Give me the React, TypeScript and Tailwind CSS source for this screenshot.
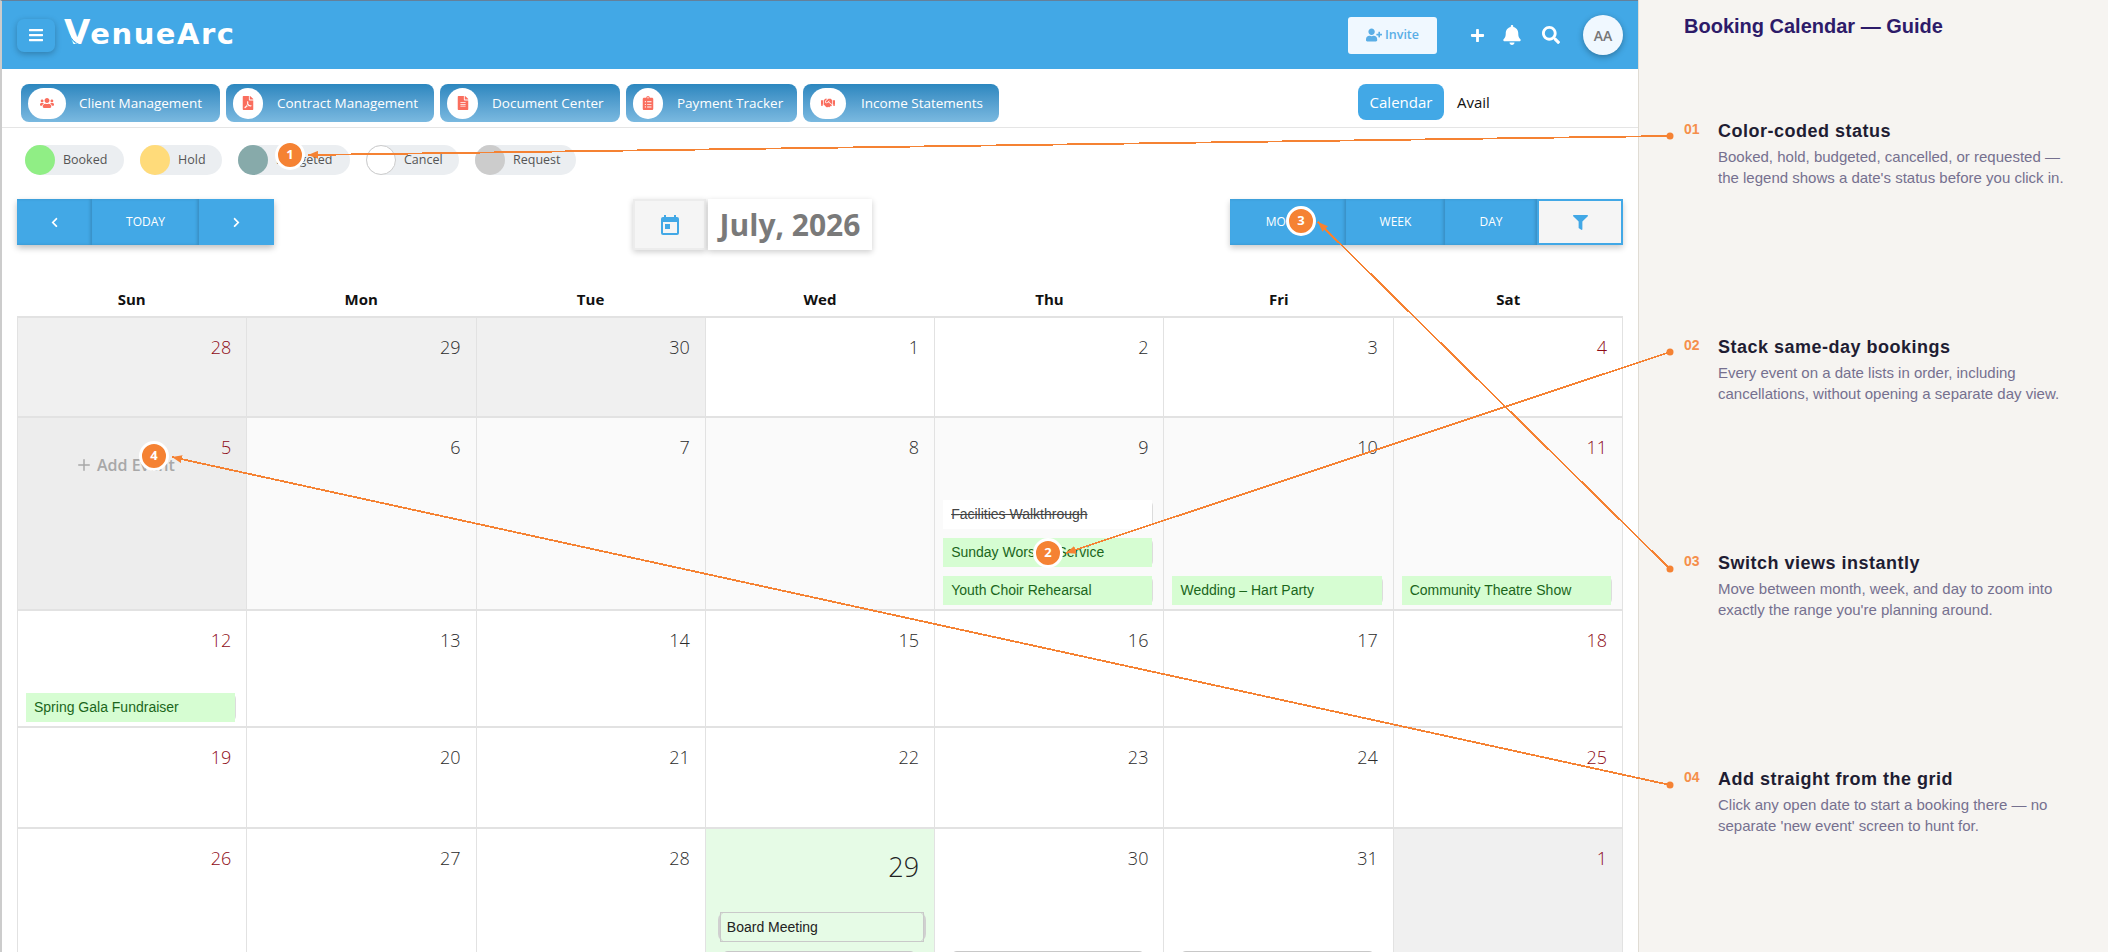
import type { ReactNode } from "react";
import { Plus } from "lucide-react";
import {
  FaBars,
  FaBell,
  FaChevronLeft,
  FaChevronRight,
  FaClipboardList,
  FaFileAlt,
  FaFilePdf,
  FaFilter,
  FaHandshake,
  FaPlus,
  FaSearch,
  FaUserPlus,
  FaUsers,
} from "react-icons/fa";

const tabs = [
  { label: "Client Management", icon: <FaUsers />, w: "w-[199px]", pill: "w-[38px]", gap: "gap-[13px]" },
  { label: "Contract Management", icon: <FaFilePdf />, w: "w-[208px]", pill: "w-[30px]", gap: "gap-[14px]" },
  { label: "Document Center", icon: <FaFileAlt />, w: "w-[180px]", pill: "w-[31px]", gap: "gap-[14px]" },
  { label: "Payment Tracker", icon: <FaClipboardList />, w: "w-[171px]", pill: "w-[30px]", gap: "gap-[14px]" },
  { label: "Income Statements", icon: <FaHandshake />, w: "w-[196px]", pill: "w-[36px]", gap: "gap-[15px]" },
];

const legend = [
  { label: "Booked", dot: "bg-[#90ee85]", w: "w-[99px]" },
  { label: "Hold", dot: "bg-[#ffdb7a]", w: "w-[82px]" },
  { label: "Budgeted", dot: "bg-[#87aaaa]", w: "w-[112px]" },
  { label: "Cancel", dot: "bg-white border border-[#cccccc]", w: "w-[93px]" },
  { label: "Request", dot: "bg-[#cccccc]", w: "w-[101px]" },
];

const guide = [
  {
    n: "01",
    title: "Color-coded status",
    lines: ["Booked, hold, budgeted, cancelled, or requested —", "the legend shows a date's status before you click in."],
  },
  {
    n: "02",
    title: "Stack same-day bookings",
    lines: ["Every event on a date lists in order, including", "cancellations, without opening a separate day view."],
  },
  {
    n: "03",
    title: "Switch views instantly",
    lines: ["Move between month, week, and day to zoom into", "exactly the range you're planning around."],
  },
  {
    n: "04",
    title: "Add straight from the grid",
    lines: ["Click any open date to start a booking there — no", "separate 'new event' screen to hunt for."],
  },
];

type Ev = { title: string; kind: "booked" | "cancel" | "plain" | "stub" };
type Day = { d: number; bg?: string; sun?: boolean; big?: boolean; add?: boolean; events?: Ev[] };

const weeks: { h: string; days: Day[] }[] = [
  {
    h: "h-[100px]",
    days: [
      { d: 28, bg: "bg-[#f0f0f0]", sun: true },
      { d: 29, bg: "bg-[#f0f0f0]" },
      { d: 30, bg: "bg-[#f0f0f0]" },
      { d: 1 },
      { d: 2 },
      { d: 3 },
      { d: 4, sun: true },
    ],
  },
  {
    h: "h-[193px]",
    days: [
      { d: 5, bg: "bg-[#ededed]", sun: true, add: true },
      { d: 6, bg: "bg-[#fafafa]" },
      { d: 7, bg: "bg-[#fafafa]" },
      { d: 8, bg: "bg-[#fafafa]" },
      {
        d: 9,
        bg: "bg-[#fafafa]",
        events: [
          { title: "Facilities Walkthrough", kind: "cancel" },
          { title: "Sunday Worship Service", kind: "booked" },
          { title: "Youth Choir Rehearsal", kind: "booked" },
        ],
      },
      { d: 10, bg: "bg-[#fafafa]", events: [{ title: "Wedding – Hart Party", kind: "booked" }] },
      { d: 11, bg: "bg-[#fafafa]", sun: true, events: [{ title: "Community Theatre Show", kind: "booked" }] },
    ],
  },
  {
    h: "h-[117px]",
    days: [
      { d: 12, sun: true, events: [{ title: "Spring Gala Fundraiser", kind: "booked" }] },
      { d: 13 },
      { d: 14 },
      { d: 15 },
      { d: 16 },
      { d: 17 },
      { d: 18, sun: true },
    ],
  },
  {
    h: "h-[101px]",
    days: [
      { d: 19, sun: true },
      { d: 20 },
      { d: 21 },
      { d: 22 },
      { d: 23 },
      { d: 24 },
      { d: 25, sun: true },
    ],
  },
  {
    h: "h-[157px]",
    days: [
      { d: 26, sun: true },
      { d: 27 },
      { d: 28 },
      {
        d: 29,
        big: true,
        bg: "bg-[#e6fbe6]",
        events: [
          { title: "Board Meeting", kind: "plain" },
          { title: "", kind: "stub" },
        ],
      },
      { d: 30, events: [{ title: "", kind: "stub" }] },
      { d: 31, events: [{ title: "", kind: "stub" }] },
      { d: 1, bg: "bg-[#f0f0f0]", sun: true },
    ],
  },
];

function EventChip({ ev }: { ev: Ev }) {
  if (ev.kind === "stub") {
    return <div className="mx-[8px] h-[29px] rounded-t-[6px] border-t-2 border-[#c8c8c8]" />;
  }
  if (ev.kind === "plain") {
    return (
      <div className="mr-[-2px] ml-[4px] h-[30px] rounded-[8px] border-x-2 border-[#d0d0d0]">
        <div className="flex h-full items-center border border-[#c9c9c9] pl-[6px] font-['Liberation_Sans'] text-[14px] text-[#222]">
          {ev.title}
        </div>
      </div>
    );
  }
  const cancel = ev.kind === "cancel";
  return (
    <div className="rounded-r-[6px] border-r border-[#dcdcdc]">
      <div
        className={
          cancel
            ? "flex h-[29px] items-center bg-white pl-[8px] font-['Liberation_Sans'] text-[14px] text-[#444] line-through"
            : "flex h-[29px] items-center bg-[#d6fdd2] pl-[8px] font-['Liberation_Sans'] text-[14px] text-[#1b661b]"
        }
      >
        {ev.title}
      </div>
    </div>
  );
}

function DayCell({ day }: { day: Day }) {
  return (
    <div className={`relative flex min-w-0 flex-col border-r border-b-2 border-[#e2e2e2] pb-[4px] ${day.bg ?? "bg-white"}`}>
      <div
        className={
          day.big
            ? "pt-[20px] pr-[15px] text-right text-[27px] leading-[36px] font-light text-[#222]"
            : `pt-[17px] pr-[15px] text-right text-[18px] leading-[25px] font-light ${day.sun ? "text-[#8e0b16]" : "text-[#2b2b2b]"}`
        }
      >
        {day.d}
      </div>
      {day.add && (
        <div className="absolute top-[35px] left-[57px] flex items-center gap-[4px] text-[16px] font-semibold text-[#a8a8a8]">
          <Plus size={18} />
          Add Event
        </div>
      )}
      <div className="mt-auto flex flex-col gap-[9px] pr-[10px] pl-[8px]">
        {day.events?.map((ev, i) => <EventChip key={i} ev={ev} />)}
      </div>
    </div>
  );
}

function BarButton({ className, children }: { className: string; children: ReactNode }) {
  return (
    <div className={`flex h-[46px] items-center justify-center bg-[#42a8e6] text-[12px] text-white shadow-[inset_-2px_0_3px_rgba(0,0,0,0.14)] ${className}`}>
      {children}
    </div>
  );
}

function Badge({ n, className }: { n: number; className: string }) {
  return (
    <div className={`absolute flex h-[30px] w-[30px] items-center justify-center rounded-full border-[3px] border-white bg-[#f58233] text-[13px] font-bold text-white ${className}`}>
      {n}
    </div>
  );
}

export default function App() {
  return (
    <div className="relative flex h-[952px] w-[2108px] overflow-hidden bg-white font-['Open_Sans',sans-serif]">
      {/* App */}
      <div className="h-full w-[1638px] shrink-0 border-t border-l-2 border-t-[#64809a] border-l-[#cccccc]">
        {/* Header */}
        <div className="flex h-[68px] items-center bg-[#42a8e6] pr-[15px] pl-[15px]">
          <div className="flex h-[33px] w-[38px] items-center justify-center rounded-[7px] bg-[#42a8e6] text-[16px] text-white shadow-[0_2px_6px_rgba(0,0,0,0.25)]">
            <FaBars />
          </div>
          <div className="relative mb-[4px] ml-[9px] font-['DejaVu_Sans',sans-serif] text-[29px] leading-[34px] font-bold tracking-[1.5px] text-white">
            <span className="text-[34px] tracking-normal">V</span>enueArc
            <svg className="absolute top-[7px] left-0 h-[26px] w-[30px]" viewBox="0 0 30 26" fill="none">
              <path d="M5 12c2 5 6 9 11 11" stroke="#42a8e6" strokeWidth="1" />
              <path d="M3 10c3 6 7 11 12 14" stroke="#42a8e6" strokeWidth="0.7" />
            </svg>
          </div>
          <div className="ml-auto flex h-[37px] w-[89px] items-center justify-center gap-[3px] rounded-[3px] bg-[#f0f8ff] text-[12.5px] font-semibold text-[#5aaee6]">
            <FaUserPlus className="text-[16px]" />
            Invite
          </div>
          <FaPlus className="ml-[33px] text-[15px] text-white" />
          <FaBell className="ml-[17px] text-[20px] text-white" />
          <FaSearch className="ml-[20px] text-[18px] text-white" />
          <div className="ml-[23px] flex h-[40px] w-[40px] items-center justify-center rounded-full bg-[#f0f8ff] text-[14px] font-semibold text-[#777] shadow-[0_2px_6px_rgba(0,0,0,0.3)]">
            AA
          </div>
        </div>

        {/* Tabs */}
        <div className="flex h-[59px] items-start border-b border-[#e5e5e5] pt-[15px] pl-[19px]">
          <div className="flex gap-[6px]">
            {tabs.map((t) => (
              <div
                key={t.label}
                className={`flex h-[38px] items-center rounded-[8px] bg-gradient-to-b from-[#2b87bf] to-[#7ab9e0] pl-[7px] text-[13.5px] text-white ${t.w} ${t.gap}`}
              >
                <span className={`flex h-[31px] items-center justify-center rounded-full bg-white text-[14px] text-[#fa6e5e] ${t.pill}`}>
                  {t.icon}
                </span>
                {t.label}
              </div>
            ))}
          </div>
          <div className="ml-[359px] flex h-[36px] w-[86px] items-center justify-center rounded-[8px] bg-[#42a8e6] text-[15px] text-white">
            Calendar
          </div>
          <div className="ml-[13px] flex h-[36px] items-center text-[15px] text-[#111]">Avail</div>
        </div>

        {/* Legend */}
        <div className="flex gap-[16px] pt-[17px] pl-[23px]">
          {legend.map((l) => (
            <div key={l.label} className={`flex h-[30px] items-center gap-[8px] rounded-full bg-[#ebeef1] text-[12.5px] text-[#555] ${l.w}`}>
              <span className={`h-[30px] w-[30px] shrink-0 rounded-full ${l.dot}`} />
              {l.label}
            </div>
          ))}
        </div>

        {/* Toolbar */}
        <div className="relative mt-[24px] flex h-[51px] items-start pl-[15px]">
          <div className="flex rounded-[2px] shadow-[0_3px_6px_rgba(0,0,0,0.25)]">
            <BarButton className="w-[75px]">
              <FaChevronLeft className="text-[11px]" />
            </BarButton>
            <BarButton className="w-[107px]">TODAY</BarButton>
            <div className="flex h-[46px] w-[75px] items-center justify-center bg-[#42a8e6] text-white">
              <FaChevronRight className="text-[11px]" />
            </div>
          </div>
          <div className="ml-[359px] flex h-[51px] w-[73px] items-center justify-center border-2 border-[#ececec] bg-[#f5f5f5] shadow-[0_2px_6px_rgba(0,0,0,0.2)]">
            <svg width="18" height="20" viewBox="0 0 18 20">
              <rect x="0" y="2" width="18" height="18" rx="2" fill="#42a8e6" />
              <rect x="2" y="7" width="14" height="11" fill="#f5f5f5" />
              <rect x="4" y="9" width="5" height="5" fill="#42a8e6" />
              <rect x="3" y="0" width="2" height="3" fill="#42a8e6" />
              <rect x="13" y="0" width="2" height="3" fill="#42a8e6" />
            </svg>
          </div>
          <div className="ml-[2px] flex h-[51px] w-[164px] items-center justify-center bg-white text-[30px] font-bold text-[#7a7a7a] shadow-[0_2px_6px_rgba(0,0,0,0.2)]">
            July, 2026
          </div>
          <div className="mr-[15px] ml-auto flex shadow-[0_3px_6px_rgba(0,0,0,0.2)]">
            <BarButton className="w-[116px] shadow-[inset_-2px_0_3px_rgba(0,0,0,0.14),0_8px_14px_rgba(0,0,0,0.25)]">MONTH</BarButton>
            <BarButton className="w-[99px]">WEEK</BarButton>
            <BarButton className="w-[92px]">DAY</BarButton>
            <div className="flex h-[46px] w-[86px] items-center justify-center border-2 border-[#42a8e6] bg-[#f5f5f5] text-[15px] text-[#42a8e6]">
              <FaFilter />
            </div>
          </div>
        </div>

        {/* Calendar */}
        <div className="mt-[37px] ml-[15px] w-[1606px]">
          <div className="grid h-[31px] grid-cols-7 border-b-2 border-[#e2e2e2]">
            {["Sun", "Mon", "Tue", "Wed", "Thu", "Fri", "Sat"].map((d) => (
              <div key={d} className="text-center text-[15px] leading-[24px] font-bold text-[#111]">
                {d}
              </div>
            ))}
          </div>
          {weeks.map((w, i) => (
            <div key={i} className={`grid grid-cols-7 border-l border-[#e2e2e2] ${w.h}`}>
              {w.days.map((day, j) => (
                <DayCell key={j} day={day} />
              ))}
            </div>
          ))}
        </div>
      </div>

      {/* Guide */}
      <div className="h-full flex-1 border-l border-[#e0dcd4] bg-[#f6f4f1] pl-[45px] font-['Liberation_Sans',sans-serif]">
        <div className="mt-[13px] mb-[81px] text-[20px] leading-[26px] font-bold text-[#2d1b69]">Booking Calendar — Guide</div>
        {guide.map((g) => (
          <div key={g.n} className="flex h-[216px] items-start">
            <div className="mt-[-1px] w-[34px] shrink-0 text-[14px] leading-[20px] font-bold text-[#f58f4b]">{g.n}</div>
            <div>
              <div className="text-[18px] leading-[22px] font-bold tracking-[0.5px] text-[#1f1d33]">{g.title}</div>
              <div className="mt-[4px] text-[15px] leading-[21px] text-[#75708f]">
                {g.lines.map((line) => (
                  <div key={line}>{line}</div>
                ))}
              </div>
            </div>
          </div>
        ))}
      </div>

      {/* Callouts */}
      <svg className="pointer-events-none absolute inset-0" width="2108" height="952">
        <defs>
          <marker id="head" markerUnits="userSpaceOnUse" markerWidth="10" markerHeight="8" refX="10" refY="4" orient="auto">
            <path d="M0 0 L10 4 L0 8 Z" fill="#f58233" />
          </marker>
        </defs>
        {[
          ["1670", "136", "308", "155"],
          ["1670", "352", "1066", "553"],
          ["1670", "569", "1318", "222"],
          ["1670", "785", "172", "457"],
        ].map(([x1, y1, x2, y2]) => (
          <g key={y1}>
            <line x1={x1} y1={y1} x2={x2} y2={y2} stroke="#f58233" strokeWidth="1.8" shapeRendering="crispEdges" markerEnd="url(#head)" />
            <circle cx={x1} cy={y1} r="3.5" fill="#f58233" />
          </g>
        ))}
      </svg>
      <Badge n={1} className="top-[140px] left-[275px]" />
      <Badge n={2} className="top-[538px] left-[1033px]" />
      <Badge n={3} className="top-[206px] left-[1286px]" />
      <Badge n={4} className="top-[441px] left-[139px]" />
    </div>
  );
}
